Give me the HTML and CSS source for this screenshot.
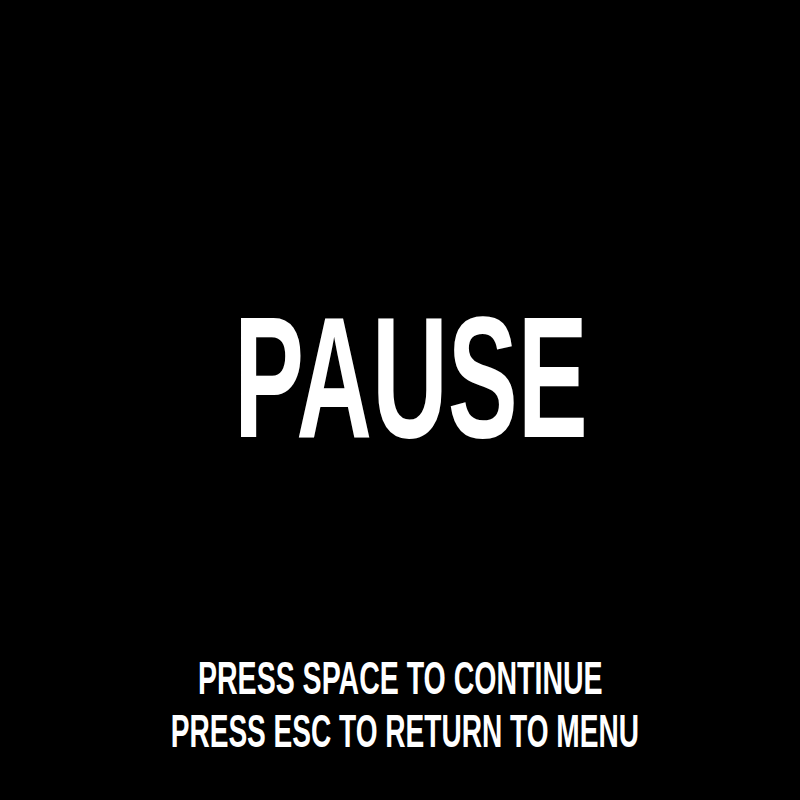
FILE: index.html
```html
<!DOCTYPE html>
<html>
<head>
<meta charset="utf-8">
<link rel="stylesheet" href="styles.css">
</head>
<body>
<div class="screen">
  <h1 class="title"><span class="squeeze">PAUSE</span></h1>
  <div class="hints">
    <p class="hint"><span class="squeeze hint-text">PRESS SPACE TO CONTINUE</span></p>
    <p class="hint hint-second"><span class="squeeze hint-text">PRESS ESC TO RETURN TO MENU</span></p>
  </div>
</div>
</body>
</html>
```

FILE: styles.css
```css
html, body {
  margin: 0;
  padding: 0;
  background: #000;
}
.screen {
  width: 800px;
  height: 800px;
  display: flex;
  flex-direction: column;
  align-items: center;
  color: #fff;
  font-family: "Liberation Sans", "DejaVu Sans", sans-serif;
  font-weight: bold;
}
.title {
  margin: 291px 0 0 0;
  padding-left: 21px;
  box-sizing: border-box;
  font-size: 172px;
  line-height: 172px;
  font-weight: bold;
  text-align: center;
  width: 800px;
}
.squeeze {
  display: inline-block;
  transform: scaleX(0.61);
  transform-origin: center;
  white-space: nowrap;
}
.hints {
  margin-top: 189px;
  width: 800px;
  text-align: center;
}
.hint {
  margin: 0;
  font-size: 46px;
  line-height: 53px;
}
.hint-second {
  padding-left: 10px;
}
.hint-text {
  transform: scaleX(0.62);
}
.hint-second .hint-text {
  transform: scaleX(0.61);
}
```
